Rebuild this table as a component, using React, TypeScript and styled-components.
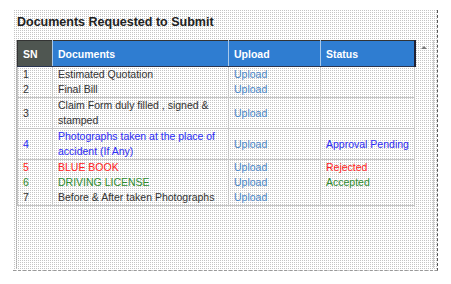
import React from 'react';
import styled, { createGlobalStyle } from 'styled-components';

const GlobalStyle = createGlobalStyle`
  body {
    margin: 0;
    background: #fff;
    font-family: Arial, "Liberation Sans", sans-serif;
  }
`;

const dots = `conic-gradient(#c4c4c4 0 25%, #fff 0 100%) 0 0 / 2px 2px`;

const Page = styled.div`
  width: 451px;
  height: 284px;
  padding: 10px 0 0 13px;
  box-sizing: border-box;
`;

const Panel = styled.section`
  width: 425px;
  height: 261px;
  background: ${dots};
  border-right: 1px dashed #555;
  border-bottom: 1px dashed #999;
  box-sizing: border-box;
  display: flex;
  flex-direction: column;
`;

const Title = styled.h2`
  margin: 0;
  height: 30px;
  padding: 5px 0 0 4px;
  box-sizing: border-box;
  font-size: 12.5px;
  font-weight: bold;
  color: #222;
  line-height: 15px;
`;

const Grid = styled.div`
  margin-left: 3px;
  width: 416px;
  height: 228px;
  display: flex;
  border-left: 1px dotted #aaa;
  box-sizing: border-box;
`;

const Table = styled.table`
  width: 397px;
  flex: none;
  border-collapse: collapse;
  table-layout: fixed;
  align-self: flex-start;
  font-size: 10.5px;
`;

const HeadCell = styled.th<{ $dark?: boolean; $w: number }>`
  box-sizing: border-box;
  width: ${(p) => p.$w}px;
  height: 26px;
  padding: 1px 0 0 5px;
  text-align: left;
  color: #fff;
  font-weight: bold;
  background: ${(p) => (p.$dark ? '#4f5651' : '#2f7dd1')};
  border-top: 1px solid #333;
  border-bottom: 1px solid #2a3550;
  border-right: 1px solid #a9c9ea;
  &:first-child {
    border-left: 1px solid #333;
  }
  &:last-child {
    border-right: 2px solid #223;
  }
`;

const Row = styled.tr<{ $line?: boolean }>`
  border-bottom: ${(p) => (p.$line ? '1px solid #c6c6c6' : 'none')};
`;

const toneColor: Record<string, string> = {
  plain: '#333',
  blue: '#2b2bf5',
  red: '#ff2020',
  green: '#2e8b2e',
  link: '#4a86c8',
};

const Cell = styled.td<{ $tone?: string }>`
  box-sizing: border-box;
  padding: 0 4px 0 5px;
  line-height: 15px;
  vertical-align: middle;
  color: ${(p) => toneColor[p.$tone || 'plain']};
  border-right: 1px solid #c6c6c6;
  &:first-child {
    border-left: 1px solid #c6c6c6;
  }
`;

const Scroll = styled.div`
  width: 18px;
  flex: none;
  height: 100%;
  border-right: 1px solid #cfcfcf;
  display: flex;
  justify-content: center;
  padding-top: 6px;
  box-sizing: border-box;
`;

const Arrow = styled.span`
  width: 0;
  height: 0;
  border-left: 3px solid transparent;
  border-right: 3px solid transparent;
  border-bottom: 3px solid #777;
`;

type Doc = { name: string; tone?: string; status?: string; line?: boolean };

const docs: Doc[] = [
  { name: 'Estimated Quotation' },
  { name: 'Final Bill', line: true },
  { name: 'Claim Form duly filled , signed & stamped', line: true },
  {
    name: 'Photographs taken at the place of accident (If Any)',
    tone: 'blue',
    status: 'Approval Pending',
    line: true,
  },
  { name: 'BLUE BOOK', tone: 'red', status: 'Rejected' },
  { name: 'DRIVING LICENSE', tone: 'green', status: 'Accepted' },
  { name: 'Before & After taken Photographs', line: true },
];

const App = () => (
  <>
    <GlobalStyle />
    <Page>
      <Panel>
        <Title>Documents Requested to Submit</Title>
        <Grid>
          <Table>
            <thead>
              <tr>
                <HeadCell $dark $w={35}>SN</HeadCell>
                <HeadCell $w={176}>Documents</HeadCell>
                <HeadCell $w={92}>Upload</HeadCell>
                <HeadCell $w={94}>Status</HeadCell>
              </tr>
            </thead>
            <tbody>
              {docs.map((d, i) => (
                <Row key={d.name} $line={d.line}>
                  <Cell $tone={d.tone}>{i + 1}</Cell>
                  <Cell $tone={d.tone}>{d.name}</Cell>
                  <Cell $tone="link">Upload</Cell>
                  <Cell $tone={d.tone}>{d.status}</Cell>
                </Row>
              ))}
            </tbody>
          </Table>
          <Scroll>
            <Arrow />
          </Scroll>
        </Grid>
      </Panel>
    </Page>
  </>
);

export default App;
